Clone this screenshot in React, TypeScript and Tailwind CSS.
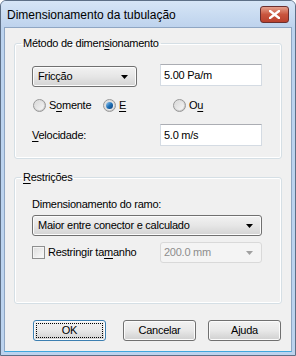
import React from 'react'

const FONT = { fontFamily: '"Liberation Sans", Arial, sans-serif' }

function Radio({ checked, label, u }: { checked?: boolean; label: string; u: number }) {
  return (
    <div className="flex items-center w-[70px] h-[16px]">
      <span className="ml-[1px] w-[13px] h-[13px] rounded-full border border-[#979797] bg-gradient-to-br from-[#e8e8e8] to-[#c8c8c8] flex items-center justify-center">
        <span className="w-[9px] h-[9px] rounded-full bg-gradient-to-br from-[#d9d9d9] to-[#f6f6f6] flex items-center justify-center">
          {checked && <span className="w-[7px] h-[7px] rounded-full bg-gradient-to-br from-[#9cd1f6] via-[#1f72b8] to-[#0c3d7a]" />}
        </span>
      </span>
      <span className="ml-[3px]">
        {label.slice(0, u)}
        <span className="underline underline-offset-[2px]">{label[u]}</span>
        {label.slice(u + 1)}
      </span>
    </div>
  )
}

function Arrow({ color = '#000' }: { color?: string }) {
  return (
    <svg width="7" height="4" viewBox="0 0 7 4">
      <path d="M0 0h7L3.5 4z" fill={color} />
    </svg>
  )
}

function Combo({ text, w }: { text: string; w: string }) {
  return (
    <div className={`${w} h-[21px] rounded-[3px] border border-[#707070] bg-gradient-to-b from-[#f2f2f2] via-[#e6e6e6] to-[#d3d3d3] flex items-center pl-[5px] pr-[8px] justify-between shadow-[inset_0_0_0_1px_#fcfcfc]`}>
      <span>{text}</span>
      <Arrow />
    </div>
  )
}

function Button({ label, def, cls }: { label: string; def?: boolean; cls: string }) {
  return (
    <div className={`${cls} w-[73px] h-[21px] rounded-[3px] border ${def ? 'border-[#3c7fb1]' : 'border-[#707070]'} bg-gradient-to-b from-[#f2f2f2] via-[#e8e8e8] to-[#d0d0d0] p-[2px] shadow-[inset_0_0_0_1px_#fbfbfb]`}>
      <div className={`h-full flex items-center justify-center ${def ? 'border border-dotted border-black' : ''}`}>{label}</div>
    </div>
  )
}

export default function App() {
  return (
    <div style={FONT} className="w-[296px] h-[356px] bg-[#bcd3ee] border border-[#5d6f86] rounded-t-[6px] flex flex-col text-[11px] text-black overflow-hidden">
      <div className="h-[26px] flex items-center justify-between pl-[6px] pr-[6px] bg-gradient-to-b from-[#d6e5f6] to-[#bed3ed]">
        <span className="text-[12px] mt-[2px]">Dimensionamento da tubulação</span>
        <div className="w-[29px] h-[17px] mt-[1px] rounded-[3px] border border-[#6b2f2f] bg-gradient-to-b from-[#e4a08d] via-[#c9553e] to-[#b9412e] flex items-center justify-center">
          <svg width="11" height="9" viewBox="0 0 11 9">
            <path d="M1 1l9 7M10 1L1 8" stroke="#fff" strokeWidth="2.4" strokeLinecap="square" />
          </svg>
        </div>
      </div>
      <div className="flex-1 mx-[3px] mb-[3px] bg-[#f0f0f0] border border-[#8fa6c3] border-b-[#3fa6dc] flex flex-col px-[9px] pt-[7px] tracking-[-0.25px]">
        <fieldset className="border border-[#d5dfe5] rounded-[3px] shadow-[inset_0_0_0_1px_#fff]">
          <legend className="ml-[6px] px-[2px] leading-[16px] text-[11px]">
            Método de dimen<span className="underline underline-offset-[2px]">s</span>ionamento
          </legend>
          <div className="pl-[17px] pb-[12px] flex flex-col">
            <div className="flex items-start mt-[13px]">
              <div className="mt-[2px]">
                <Combo text="Fricção" w="w-[105px]" />
              </div>
              <div className="ml-[23px] w-[102px] h-[22px] bg-white border border-[#d4dbe3] border-t-[#abadb3] flex items-center pl-[3px]">5.00 Pa/m</div>
            </div>
            <div className="flex items-center mt-[10px]">
              <Radio label="Somente" u={1} />
              <Radio label="E" u={0} checked />
              <Radio label="Ou" u={1} />
            </div>
            <div className="flex items-center mt-[11px]">
              <span className="w-[128px]">
                <span className="underline underline-offset-[2px]">V</span>elocidade:
              </span>
              <div className="w-[102px] h-[22px] bg-white border border-[#d4dbe3] border-t-[#abadb3] flex items-center pl-[3px]">5.0 m/s</div>
            </div>
          </div>
        </fieldset>
        <fieldset className="mt-[10px] border border-[#d5dfe5] rounded-[3px] shadow-[inset_0_0_0_1px_#fff]">
          <legend className="ml-[6px] px-[2px] leading-[16px] text-[11px]">
            <span className="underline underline-offset-[2px]">R</span>estrições
          </legend>
          <div className="pl-[17px] pb-[40px] flex flex-col">
            <div className="mt-[11px] leading-[16px]">Dimensionamento do ramo:</div>
            <div className="mt-[3px]">
              <Combo text="Maior entre conector e calculado" w="w-[230px]" />
            </div>
            <div className="flex items-center mt-[6px]">
              <div className="flex items-center w-[128px]">
                <span className="w-[13px] h-[13px] border border-[#8e8f8f] bg-gradient-to-br from-[#dcdcdc] to-[#fbfbfb] shadow-[inset_0_0_0_1px_#f4f4f4]" />
                <span className="ml-[3px]">
                  Restringir ta<span className="underline underline-offset-[2px]">m</span>anho
                </span>
              </div>
              <div className="w-[102px] h-[21px] rounded-[3px] border border-[#d9d9d9] bg-[#f4f4f4] flex items-center justify-between pl-[3px] pr-[8px] text-[#8d8d8d]">
                <span>200.0 mm</span>
                <Arrow color="#a0a0a0" />
              </div>
            </div>
          </div>
        </fieldset>
        <div className="flex mt-[16px]">
          <Button label="OK" def cls="ml-[19px]" />
          <Button label="Cancelar" cls="ml-[17px]" />
          <Button label="Ajuda" cls="ml-[12px]" />
        </div>
      </div>
    </div>
  )
}
